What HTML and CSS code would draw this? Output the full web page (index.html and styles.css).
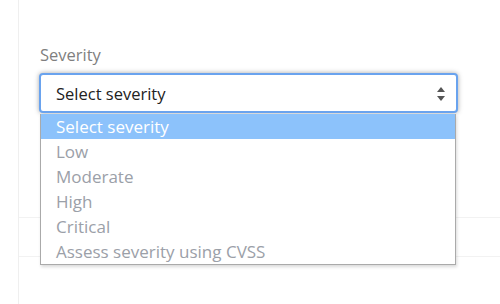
FILE: index.html
```html
<!DOCTYPE html>
<html lang="en">
<head>
    <meta charset="UTF-8">
    <meta name="viewport" content="width=device-width, initial-scale=1.0">
    <title>Severity</title>
    <link rel="stylesheet" href="styles.css">
</head>
<body>
    <div class="page">
        <div class="form-group">
            <label class="label">Severity</label>
            <div class="select-wrap">
                <div class="select">
                    <span>Select severity</span>
                    <svg class="arrows" width="10" height="16" viewBox="0 0 10 16">
                        <path d="M5 1 L9 6 L1 6 Z" fill="#555"/>
                        <path d="M1 10 L9 10 L5 15 Z" fill="#555"/>
                    </svg>
                </div>
                <ul class="options">
                    <li class="option active">Select severity</li>
                    <li class="option">Low</li>
                    <li class="option">Moderate</li>
                    <li class="option">High</li>
                    <li class="option">Critical</li>
                    <li class="option">Assess severity using CVSS</li>
                </ul>
            </div>
        </div>
        <div class="row"></div>
    </div>
</body>
</html>
```
FILE: styles.css
```css
body {
    font-family: "Open Sans", "Noto Sans", sans-serif;
    background: #fff;
    margin: 0;
}
.page {
    margin-left: 18px;
    border-left: 1px solid #efefef;
    height: 304px;
    box-sizing: border-box;
    padding-top: 44px;
}
.form-group {
    padding-left: 20px;
    width: 419px;
}
.label {
    display: block;
    font-size: 16.5px;
    color: #7f7f7f;
    line-height: 22px;
    margin-bottom: 7px;
    padding-left: 1px;
}
.select-wrap {
    position: relative;
}
.select {
    height: 40px;
    box-sizing: border-box;
    border: 2px solid #6aa3ee;
    border-radius: 4px;
    box-shadow: 0 0 5px rgba(0,0,0,0.35);
    display: flex;
    align-items: center;
    justify-content: space-between;
    padding: 0 10px 0 15px;
    font-size: 16.5px;
    color: #222;
    background: #fff;
}
.arrows {
    margin-top: 1px;
}
.options {
    position: absolute;
    top: 41px;
    left: 1px;
    width: 416px;
    margin: 0;
    padding: 0;
    list-style: none;
    background: #fff;
    border: 1px solid #aaa;
    border-top: none;
    box-sizing: border-box;
    box-shadow: 1px 2px 3px rgba(0,0,0,0.15);
}
.option {
    height: 25px;
    line-height: 25px;
    padding-left: 15px;
    font-size: 17px;
    color: #9ba0a8;
}
.option.active {
    background: #8cc2fb;
    color: #fff;
}
.row {
    margin-top: 104px;
    height: 38px;
    border-top: 1px solid #f2f2f2;
    border-bottom: 1px solid #f2f2f2;
}
```
